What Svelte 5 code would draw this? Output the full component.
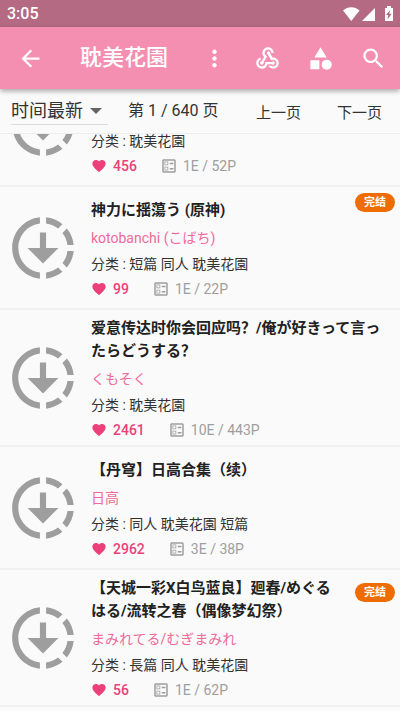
<script lang="ts">
  import { onMount } from 'svelte';

  interface Comic {
    title: string;
    author: string;
    tags: string;
    likes: number;
    pages: string;
    finished?: boolean;
  }

  const comics: Comic[] = [
    { title: '', author: '', tags: '耽美花園', likes: 456, pages: '1E / 52P' },
    { title: '神力に揺蕩う (原神)', author: 'kotobanchi (こばち)', tags: '短篇 同人 耽美花園', likes: 99, pages: '1E / 22P', finished: true },
    { title: '爱意传达时你会回应吗？/俺が好きって言ったらどうする？', author: 'くもそく', tags: '耽美花園', likes: 2461, pages: '10E / 443P' },
    { title: '【丹穹】日高合集（续）', author: '日高', tags: '同人 耽美花園 短篇', likes: 2962, pages: '3E / 38P' },
    { title: '【天城一彩X白鸟蓝良】廻春/めぐるはる/流转之春（偶像梦幻祭）', author: 'まみれてる/むぎまみれ', tags: '長篇 同人 耽美花園', likes: 56, pages: '1E / 62P', finished: true }
  ];

  let sort = $state('new');
  let list: HTMLElement;

  onMount(() => {
    list.scrollTop = 70;
  });
</script>

<div class="app">
  <div class="status">
    <span>3:05</span>
    <svg class="status-icons" viewBox="0 0 52 18" aria-hidden="true">
      <path d="M1 5.500C5.500 1 13 1 17.500 5.500L9.300 16z" />
      <path d="M33 3v13H20z" />
      <path fill-rule="evenodd" d="M43 3h2V1h4v2h2v13h-8zM48 5l-4 5h2.200L45.500 14.500l4.200-5.800h-2.400z" />
    </svg>
  </div>

  <header class="bar">
    <button class="icon-button" aria-label="返回">
      <svg viewBox="0 0 24 24"><path d="M20 11H7.830l5.590-5.590L12 4l-8 8 8 8 1.410-1.410L7.830 13H20z" /></svg>
    </button>
    <h1>耽美花園</h1>
    <button class="icon-button" aria-label="更多">
      <svg viewBox="0 0 24 24"><path d="M12 8c1.100 0 2-.9 2-2s-.9-2-2-2-2 .9-2 2 .9 2 2 2zm0 2c-1.100 0-2 .9-2 2s.9 2 2 2 2-.9 2-2-.9-2-2-2zm0 6c-1.100 0-2 .9-2 2s.9 2 2 2 2-.9 2-2-.9-2-2-2z" /></svg>
    </button>
    <button class="icon-button" aria-label="线路">
      <svg viewBox="0 0 24 24"><path d="M10 15h5.880c.27-.31.67-.5 1.120-.5.83 0 1.500.67 1.500 1.500s-.67 1.500-1.500 1.500c-.44 0-.84-.19-1.120-.5H11.900c-.46 2.280-2.480 4-4.900 4-2.760 0-5-2.240-5-5 0-2.420 1.720-4.440 4-4.900v2.070c-1.160.41-2 1.530-2 2.830 0 1.650 1.350 3 3 3s3-1.350 3-3v-1zm2.500-11c1.650 0 3 1.350 3 3h2c0-2.760-2.240-5-5-5s-5 2.240-5 5c0 1.430.6 2.710 1.550 3.620l-2.350 3.900c-.68.14-1.200.75-1.200 1.480 0 .83.67 1.500 1.500 1.500.83 0 1.500-.67 1.500-1.500 0-.16-.02-.31-.07-.45l3.380-5.630C10.490 9.610 9.500 8.420 9.500 7c0-1.650 1.350-3 3-3zm4.500 9c-.64 0-1.230.2-1.720.54l-3.050-5.070C11.700 8.190 11.350 7.640 11.350 7c0-.83.67-1.500 1.500-1.500s1.500.67 1.500 1.500c0 .15-.02.29-.06.43l2.190 3.650c.17-.03.34-.04.52-.04 2.760 0 5 2.240 5 5s-2.240 5-5 5c-1.850 0-3.470-1.010-4.330-2.500h2.670c.48.32 1.050.5 1.660.5 1.650 0 3-1.350 3-3s-1.350-3-3-3z" /></svg>
    </button>
    <button class="icon-button" aria-label="分类">
      <svg viewBox="0 0 24 24"><path d="M12 2l-5.500 9h11zM3 13.500h8v8H3z" /><circle cx="17.500" cy="17.500" r="4.500" /></svg>
    </button>
    <button class="icon-button" aria-label="搜索">
      <svg viewBox="0 0 24 24"><path d="M15.500 14h-.79l-.28-.27C15.410 12.590 16 11.110 16 9.500 16 5.910 13.090 3 9.500 3S3 5.910 3 9.500 5.910 16 9.500 16c1.610 0 3.090-.59 4.230-1.570l.27.28v.79l5 4.990L20.490 19l-4.990-5zm-6 0C7.010 14 5 11.990 5 9.500S7.010 5 9.500 5 14 7.010 14 9.500 11.990 14 9.500 14z" /></svg>
    </button>
  </header>

  <nav class="pager">
    <div class="sort">
      <select bind:value={sort} aria-label="排序">
        <option value="new">时间最新</option>
      </select>
      <svg viewBox="0 0 12 6" aria-hidden="true"><path d="M0 0h12L6 6z" /></svg>
    </div>
    <span class="page">第 1 / 640 页</span>
    <button class="step">上一页</button>
    <button class="step">下一页</button>
  </nav>

  <main class="list" bind:this={list}>
    {#each comics as comic}
      <article class="comic" class:finished={comic.finished}>
        <svg class="cover" viewBox="0 0 24 24" aria-hidden="true">
          <path d="M18.320 4.260C16.840 3.050 15.010 2.250 13 2.050v2.020c1.460.18 2.790.76 3.900 1.620zM19.930 11h2.020c-.2-2.010-1-3.840-2.210-5.320L18.310 7.100c.86 1.110 1.440 2.440 1.620 3.900zM18.310 16.900l1.430 1.430c1.210-1.480 2.010-3.320 2.210-5.320h-2.020c-.18 1.450-.76 2.780-1.620 3.890zM13 19.930v2.020c2.010-.2 3.840-1 5.320-2.210l-1.430-1.430c-1.100.86-2.430 1.440-3.890 1.620zM13 12V7h-2v5H7l5 5 5-5zM11 19.930v2.020c-5.050-.5-9-4.760-9-9.950s3.950-9.450 9-9.950v2.020C7.050 4.560 4 7.920 4 12s3.050 7.440 7 7.930z" />
        </svg>
        <div class="info">
          <h2>{comic.title}</h2>
          <p class="author">{comic.author}</p>
          <p class="tags">分类 : {comic.tags}</p>
          <div class="stats">
            <svg class="heart" viewBox="0 0 24 24" aria-hidden="true"><path d="M12 21.350l-1.450-1.320C5.400 15.360 2 12.280 2 8.500 2 5.420 4.420 3 7.500 3c1.740 0 3.410.81 4.500 2.090C13.090 3.810 14.760 3 16.500 3 19.580 3 22 5.420 22 8.500c0 3.780-3.400 6.860-8.550 11.540z" /></svg>
            <span class="likes">{comic.likes}</span>
            <svg class="ballot" viewBox="0 0 24 24" aria-hidden="true"><path d="M13 7.500h5v2h-5zm0 7h5v2h-5zM19 3H5c-1.100 0-2 .9-2 2v14c0 1.100.9 2 2 2h14c1.100 0 2-.9 2-2V5c0-1.100-.9-2-2-2zm0 16H5V5h14v14zM11 6H6v5h5V6zm-1 4H7V7h3v3zm1 3H6v5h5v-5zm-1 4H7v-3h3v3z" /></svg>
            <span>{comic.pages}</span>
          </div>
        </div>
        {#if comic.finished}
          <span class="badge">完结</span>
        {/if}
      </article>
    {/each}
  </main>
</div>

<style>
  :global(body) {
    background: #fafafa;
  }

  .app {
    display: flex;
    flex-direction: column;
    height: 100vh;
    font-family: Roboto, 'Noto Sans CJK SC', sans-serif;
    font-size: 14px;
    color: #333;
  }

  h1,
  h2,
  p {
    margin: 0;
  }

  button,
  select {
    padding: 0;
    border: none;
    background: none;
    font-family: inherit;
    color: inherit;
  }

  svg {
    display: block;
    flex-shrink: 0;
    fill: currentColor;
  }

  .status {
    display: flex;
    align-items: center;
    justify-content: space-between;
    height: 27px;
    padding: 0 6px 0 7px;
    background: #b56a84;
    color: #fff;
    font-size: 16px;
    font-weight: 500;
  }

  .status-icons {
    width: 52px;
    height: 18px;
  }

  .bar {
    display: flex;
    align-items: center;
    height: 62px;
    padding-left: 4px;
    background: #f48fb1;
    color: #fff;
    box-shadow: 0 2px 5px rgba(0, 0, 0, 0.35);
    z-index: 1;
  }

  h1 {
    flex: 1;
    margin-left: 23px;
    font-size: 22px;
    font-weight: 500;
    line-height: 32px;
  }

  .icon-button {
    display: flex;
    justify-content: center;
    width: 53px;
  }

  .icon-button svg {
    width: 27px;
    height: 27px;
  }

  .pager {
    display: flex;
    align-items: center;
    gap: 36px;
    padding: 8px 18px 8px 11px;
    border-bottom: 1px solid #eee;
    font-size: 16px;
    line-height: 28px;
    white-space: nowrap;
  }

  .sort {
    display: flex;
    align-items: center;
    width: 97px;
    border-bottom: 1px solid #ddd;
  }

  .sort select {
    width: 97px;
    height: 27px;
    appearance: none;
    font-size: 18px;
  }

  .sort svg {
    width: 12px;
    height: 6px;
    margin-left: -18px;
    pointer-events: none;
    color: #666;
  }

  .page {
    flex: 1;
    margin-left: -16px;
  }

  .step {
    font-size: 15px;
    white-space: nowrap;
  }

  .list {
    flex: 1;
    min-height: 0;
    padding-bottom: 24px;
    overflow-y: auto;
    scrollbar-width: none;
  }

  .comic {
    position: relative;
    display: flex;
    align-items: center;
    gap: 11px;
    box-sizing: border-box;
    min-height: 123px;
    padding: 0 9px 0 6px;
    border-bottom: 2px solid #f1f1f1;
  }

  .cover {
    width: 74px;
    height: 74px;
    color: #9e9e9e;
  }

  .info {
    flex: 1;
    padding: 7px 0 3px;
  }

  h2 {
    min-height: 23px;
    margin-bottom: 3px;
    font-size: 15px;
    font-weight: 700;
    line-height: 23px;
    color: #212121;
  }

  .finished h2 {
    padding-right: 48px;
  }

  .author,
  .tags {
    min-height: 26px;
    line-height: 26px;
  }

  .author {
    color: #f06a9b;
  }

  .stats {
    display: flex;
    align-items: center;
    line-height: 24px;
    color: #9e9e9e;
  }

  .heart {
    width: 16px;
    height: 16px;
    margin-right: 6px;
    color: #ec407a;
  }

  .likes {
    margin-right: 23px;
    font-weight: 500;
    color: #ec407a;
  }

  .ballot {
    width: 18px;
    height: 18px;
    margin-right: 5px;
  }

  .badge {
    position: absolute;
    top: calc(50% - 55px);
    right: 5px;
    padding: 0 9px;
    border-radius: 10px;
    background: #ef6c00;
    color: #fff;
    font-size: 11px;
    font-weight: 700;
    line-height: 19px;
  }
</style>
